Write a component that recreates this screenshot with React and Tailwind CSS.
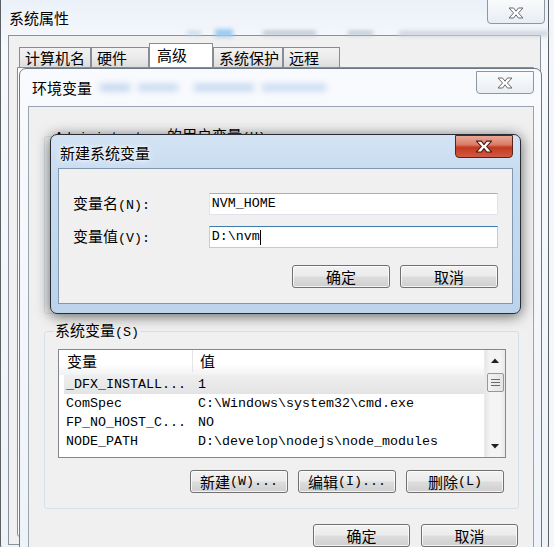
import React from 'react';

const cjk = "font-['Noto_Sans_CJK_SC','Noto_Sans',sans-serif]";
const mono = "font-['Liberation_Mono',monospace] text-[13.33px]";

const XGlyph = ({ w = 16, h = 12, edge = '#6b6b6b' }) => (
    <svg width={w} height={h} viewBox="0 0 16 12">
        <polygon
            points="1,1 5.6,1 8,4.2 10.4,1 15,1 10.4,6 15,11 10.4,11 8,7.8 5.6,11 1,11 5.6,6"
            fill="#fff"
            stroke={edge}
            strokeWidth="1"
            strokeLinejoin="round"
        />
    </svg>
);

const Btn = ({ children, w = 'w-[98px]' }) => (
    <div className={`${w} h-[23px] shrink-0 flex items-center justify-center rounded-[3px] border border-[#707070] bg-[linear-gradient(180deg,#f2f2f2_0%,#ebebeb_48%,#dddddd_52%,#cfcfcf_100%)] shadow-[inset_0_0_0_1px_rgba(255,255,255,0.75)] text-[15px] leading-[16px] text-black`}>
        {children}
    </div>
);

const Tab = ({ label, w, active }) => (
    <div
        className={
            active
                ? `${w} h-[24px] border border-b-0 border-[#898c95] bg-white pl-[7px] pt-[3px] text-[15px] leading-[16px]`
                : `${w} h-[20px] border border-b-0 border-[#898c95] bg-[linear-gradient(180deg,#f2f2f2_0%,#ebebeb_50%,#dcdcdc_100%)] pl-[5px] pt-[2px] text-[15px] leading-[16px]`
        }
    >
        {label}
    </div>
);

const rows = [
    ['_DFX_INSTALL...', '1', true],
    ['ComSpec', 'C:\\Windows\\system32\\cmd.exe', false],
    ['FP_NO_HOST_C...', 'NO', false],
    ['NODE_PATH', 'D:\\develop\\nodejs\\node_modules', false],
];

const Arrow = ({ up }) => (
    <svg width="8" height="5" viewBox="0 0 8 5">
        <polygon points={up ? '0,5 8,5 4,0.5' : '0,0 8,0 4,4.5'} fill="#202020" />
    </svg>
);

const VarList = () => (
    <div className="mt-[8px] ml-[13px] w-[448px] h-[109px] border border-[#828790] bg-white flex">
        <div className="flex-1 flex flex-col">
            <div className="flex h-[25px] shrink-0 pb-[3px] bg-[linear-gradient(180deg,#ffffff_0%,#ffffff_55%,#f1f2f4_100%)] text-[15px] leading-[16px]">
                <div className="w-[134px] pl-[8px] flex items-center border-r border-[#e3e5e8]">变量</div>
                <div className="pl-[7px] flex items-center">值</div>
            </div>
            {rows.map(([k, v, sel]) => (
                <div
                    key={k}
                    className={`flex h-[19px] items-center ml-[5px] ${mono} leading-[16px] ${sel ? 'bg-[linear-gradient(180deg,#eeeeee,#e4e4e4)]' : ''}`}
                >
                    <div className="w-[134px] pl-[2px] whitespace-pre">{k}</div>
                    <div className="whitespace-pre">{v}</div>
                </div>
            ))}
        </div>
        <div className="w-[21px] flex flex-col items-center bg-[linear-gradient(90deg,#e6e6e6_0%,#f4f4f4_25%,#f4f4f4_75%,#e8e8e8_100%)] border-l border-[#ebebeb]">
            <div className="h-[21px] w-full flex items-center justify-center"><Arrow up /></div>
            <div className="mt-[2px] w-[17px] h-[19px] rounded-[2px] border border-[#979797] bg-[linear-gradient(90deg,#f3f3f3,#e4e4e4)] flex flex-col items-center justify-center gap-[2px]">
                <div className="w-[9px] h-[1px] bg-[#6a6a6a]" />
                <div className="w-[9px] h-[1px] bg-[#6a6a6a]" />
                <div className="w-[9px] h-[1px] bg-[#6a6a6a]" />
            </div>
            <div className="flex-1" />
            <div className="h-[21px] w-full flex items-center justify-center"><Arrow /></div>
        </div>
    </div>
);

export default function App() {
    return (
        <div className={`relative w-[554px] h-[547px] overflow-hidden bg-[#f3f6fa] text-black ${cjk}`}>
            {/* 系统属性 */}
            <div className="absolute left-0 top-[-8px] w-[549px] h-[560px] rounded-[7px] border border-[#5b5f66] bg-[linear-gradient(180deg,#e9f0f8_0%,#f7f9fc_10%,#eef3f8_100%)] flex flex-col">
                <div className="relative h-[42px] shrink-0 pl-[8px] pt-[17px]">
                    <div className="text-[15px] leading-[16px] [text-shadow:0_0_6px_#fff]">系统属性</div>
                    <div className="mt-[3px] flex items-center h-[8px]">
                        <div className="ml-[178px] w-[14px] h-[4px] bg-[#c3d7ee] blur-[2px]" />
                        <div className="ml-[14px] w-[18px] h-[8px] bg-[#9ccaf1] blur-[2px]" />
                        <div className="ml-[30px] w-[54px] h-[4px] bg-[#b4bec9] blur-[2px]" />
                        <div className="ml-[32px] w-[25px] h-[4px] bg-[#b8c1cc] blur-[2px]" />
                        <div className="ml-[26px] w-[150px] h-[5px] bg-[#cbd2db] blur-[2px]" />
                    </div>
                    <div className="absolute left-[486px] top-[5px] w-[58px] h-[26px] rounded-b-[4px] border border-[#8d96a1] bg-[linear-gradient(180deg,#fafbfd,#e8edf3)] flex items-center justify-center pt-[3px]">
                        <XGlyph />
                    </div>
                </div>
                <div className="flex-1 mx-[7px] mb-[6px] border border-[#8a9099] bg-[#f0f0f0] flex flex-col">
                    <div className="h-[31px] shrink-0 flex items-end pl-[10px]">
                        <Tab label="计算机名" w="w-[72px]" />
                        <Tab label="硬件" w="w-[58px]" />
                        <Tab label="高级" w="w-[64px]" active />
                        <Tab label="系统保护" w="w-[70px]" />
                        <Tab label="远程" w="w-[57px]" />
                    </div>
                    <div className="flex-1 ml-[8px] mr-[6px] mb-[7px] border border-[#898c95] rounded-b-[3px] bg-white" />
                </div>
            </div>

            {/* 环境变量 */}
            <div className="absolute left-[19px] top-[68px] w-[523px] h-[500px] rounded-t-[7px] border border-[#6d7885] bg-[linear-gradient(180deg,#f8fafd_0%,#eef3f9_100%)] flex flex-col">
                <div className="relative h-[37px] shrink-0 flex items-center pl-[12px]">
                    <div className="text-[15px] leading-[16px] [text-shadow:0_0_6px_#fff]">环境变量</div>
                    <div className="ml-[8px] flex items-center gap-[8px] opacity-70">
                        <div className="w-[30px] h-[7px] bg-[#a9c6e8] blur-[3px]" />
                        <div className="w-[40px] h-[7px] bg-[#b1cbea] blur-[3px]" />
                        <div className="ml-[8px] w-[60px] h-[7px] bg-[#adc8e9] blur-[3px]" />
                        <div className="w-[64px] h-[7px] bg-[#b4cdeb] blur-[3px]" />
                    </div>
                    <div className="absolute left-[456px] top-[2px] w-[58px] h-[23px] rounded-b-[4px] border border-[#8d96a1] bg-[linear-gradient(180deg,#fafbfd,#e9eef4)] flex items-center justify-center">
                        <XGlyph />
                    </div>
                </div>
                <div className="flex-1 ml-[8px] mr-[7px] border border-[#9aa4b0] bg-[#f0f0f0] pl-[15px] pr-[14px] pt-[20px] flex flex-col">
                    <fieldset className="h-[187px] shrink-0 border border-[#d5dfe5] rounded-[3px]">
                        <legend className="ml-[9px] px-[1px] text-[15px] leading-[16px]">
                            <span className={mono}>Administrator </span>的用户变量<span className={mono}>(U)</span>
                        </legend>
                    </fieldset>
                    <fieldset className="mt-[8px] shrink-0 border border-[#d5dfe5] rounded-[3px] pb-[15px]">
                        <legend className="ml-[9px] px-[1px] text-[15px] leading-[16px]">
                            系统变量<span className={mono}>(S)</span>
                        </legend>
                        <VarList />
                        <div className="mt-[12px] pr-[14px] flex justify-end gap-[10px]">
                            <Btn>新建<span className={mono}>(W)...</span></Btn>
                            <Btn>编辑<span className={mono}>(I)...</span></Btn>
                            <Btn>删除<span className={mono}>(L)</span></Btn>
                        </div>
                    </fieldset>
                    <div className="mt-[15px] pr-[1px] flex justify-end gap-[11px]">
                        <Btn w="w-[97px]">确定</Btn>
                        <Btn w="w-[97px]">取消</Btn>
                    </div>
                </div>
            </div>

            {/* 新建系统变量 */}
            <div className="absolute left-[50px] top-[134px] w-[471px] h-[180px] rounded-[7px] border border-[#262c33] shadow-[0_2px_14px_rgba(0,0,0,0.6)] bg-[linear-gradient(180deg,#d3e3f4_0%,#c6dbf0_25%,#bcd3eb_100%)] flex flex-col">
                <div className="relative h-[33px] shrink-0 pl-[9px] pt-[10px]">
                    <div className="text-[15px] leading-[16px] [text-shadow:0_0_8px_#fff,0_0_3px_#fff]">新建系统变量</div>
                    <div className="absolute left-[404px] top-[0px] w-[58px] h-[23px] rounded-b-[4px] border border-[#5a2219] bg-[linear-gradient(180deg,#e9a897_0%,#dc7e69_40%,#c4391f_55%,#cf5a42_100%)] flex items-center justify-center">
                        <XGlyph w={18} h={13} edge="#4a1a12" />
                    </div>
                </div>
                <div className="flex-1 mx-[7px] mb-[9px] border border-[#8297b0] bg-[#f0f0f0] pl-[14px] pr-[14px] pt-[24px] flex flex-col">
                    <div className="flex items-center h-[22px]">
                        <div className="w-[136px] text-[15px] leading-[16px]">变量名<span className={mono}>(N):</span></div>
                        <div className="w-[290px] h-[22px] border border-[#e2e3ea] border-t-[#abadb3] bg-white flex items-center pl-[2px]">
                            <span className={`${mono} leading-[16px]`}>NVM_HOME</span>
                        </div>
                    </div>
                    <div className="mt-[11px] flex items-center h-[22px]">
                        <div className="w-[136px] text-[15px] leading-[16px]">变量值<span className={mono}>(V):</span></div>
                        <div className="w-[290px] h-[22px] border border-[#b5cfe7] border-t-[#3d7bad] bg-white flex items-center pl-[2px]">
                            <span className={`${mono} leading-[16px]`}>D:\nvm</span>
                            <div className="w-[1px] h-[15px] bg-black" />
                        </div>
                    </div>
                    <div className="mt-[17px] flex justify-end gap-[10px]">
                        <Btn>确定</Btn>
                        <Btn>取消</Btn>
                    </div>
                </div>
            </div>
        </div>
    );
}
